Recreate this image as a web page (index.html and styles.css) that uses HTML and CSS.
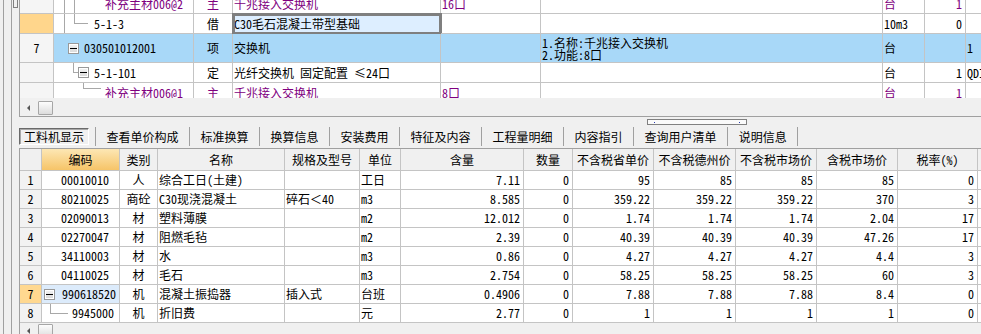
FILE: index.html
```html
<!DOCTYPE html>
<html>
<head>
<meta http-equiv="Content-Type" content="text/html; charset=utf-8"/>
<title>工料机显示</title>
<link rel="stylesheet" href="styles.css">
</head>
<body>
<div class="frame">
<div class="frame-inner">
<span class="nub"></span>
<div class="main">

<!-- upper grid: bill items and their quota rows -->
<div class="top-panel">
  <div class="tg">
    <div class="tg-scroll">
      <div class="tg-row r20 purple">
        <div class="c rh"></div>
        <div class="c"><span class="g9"></span><span class="guide"></span><span class="g9"></span><span class="guide"></span><span class="g8"></span><span class="elbow w18 short"></span><span class="g4"></span>补充主材006@2</div>
        <div class="c ctr">主</div>
        <div class="c">千兆接入交换机</div>
        <div class="c">16口</div>
        <div class="c"></div>
        <div class="c">台</div>
        <div class="c num">1</div>
        <div class="c"></div>
      </div>
      <div class="tg-row r20">
        <div class="c rh cur"></div>
        <div class="c"><span class="g9"></span><span class="guide"></span><span class="g9"></span><span class="elbow w14"></span><span class="g6"></span>5-1-3</div>
        <div class="c ctr">借</div>
        <div class="c edit">C30毛石混凝土带型基础</div>
        <div class="c"></div>
        <div class="c"></div>
        <div class="c">10m3</div>
        <div class="c num">0</div>
        <div class="c"></div>
      </div>
      <div class="tg-row r29 sel">
        <div class="c rh">7</div>
        <div class="c"><span class="g13"></span><span class="box"></span><span class="g5"></span>030501012001</div>
        <div class="c ctr">项</div>
        <div class="c">交换机</div>
        <div class="c"></div>
        <div class="c multi"><span>1.名称:千兆接入交换机</span><span>2.功能:8口</span></div>
        <div class="c">台</div>
        <div class="c num"></div>
        <div class="c">1</div>
      </div>
      <div class="tg-row r20">
        <div class="c rh"></div>
        <div class="c"><span class="g18"></span><span class="elbow w5"></span><span class="box"></span><span class="g5"></span>5-1-101</div>
        <div class="c ctr">定</div>
        <div class="c">光纤交换机 固定配置 ≤24口</div>
        <div class="c"></div>
        <div class="c"></div>
        <div class="c">台</div>
        <div class="c num">1</div>
        <div class="c">QDI</div>
      </div>
      <div class="tg-row r20 purple">
        <div class="c rh"></div>
        <div class="c"><span class="g28"></span><span class="elbow w18 short"></span><span class="g4"></span>补充主材006@1</div>
        <div class="c ctr">主</div>
        <div class="c">千兆接入交换机</div>
        <div class="c">8口</div>
        <div class="c"></div>
        <div class="c">台</div>
        <div class="c num">1</div>
        <div class="c"></div>
      </div>
    </div>
  </div>
  <div class="hscroll top-scroll"><span class="arrow"></span><span class="thumb"></span></div>
</div>

<div class="splitter"><div class="grip"><i></i><i></i></div></div>

<div class="tabs">
  <span class="tab active">工料机显示</span>
  <span class="sep"></span><span class="tab">查看单价构成</span>
  <span class="sep"></span><span class="tab">标准换算</span>
  <span class="sep"></span><span class="tab">换算信息</span>
  <span class="sep"></span><span class="tab">安装费用</span>
  <span class="sep"></span><span class="tab">特征及内容</span>
  <span class="sep"></span><span class="tab">工程量明细</span>
  <span class="sep"></span><span class="tab">内容指引</span>
  <span class="sep"></span><span class="tab">查询用户清单</span>
  <span class="sep"></span><span class="tab">说明信息</span>
  <span class="sep"></span>
</div>

<!-- lower grid: labour, material and machine lines -->
<div class="bottom-panel">
  <div class="bg-row bg-head r22">
    <div class="c"></div>
    <div class="c code-head">编码</div>
    <div class="c">类别</div>
    <div class="c">名称</div>
    <div class="c">规格及型号</div>
    <div class="c">单位</div>
    <div class="c">含量</div>
    <div class="c">数量</div>
    <div class="c">不含税省单价</div>
    <div class="c">不含税德州价</div>
    <div class="c">不含税市场价</div>
    <div class="c">含税市场价</div>
    <div class="c">税率(%)</div>
    <div class="c"></div>
  </div>
  <div class="bg-row r19">
    <div class="c rh">1</div><div class="c code">00010010</div><div class="c ctr">人</div><div class="c">综合工日(土建)</div><div class="c"></div><div class="c">工日</div>
    <div class="c num">7.11</div><div class="c num">0</div><div class="c num">95</div><div class="c num">85</div><div class="c num">85</div><div class="c num">85</div><div class="c num">0</div><div class="c"></div>
  </div>
  <div class="bg-row r19">
    <div class="c rh">2</div><div class="c code">80210025</div><div class="c ctr">商砼</div><div class="c">C30现浇混凝土</div><div class="c">碎石＜40</div><div class="c">m3</div>
    <div class="c num">8.585</div><div class="c num">0</div><div class="c num">359.22</div><div class="c num">359.22</div><div class="c num">359.22</div><div class="c num">370</div><div class="c num">3</div><div class="c"></div>
  </div>
  <div class="bg-row r19">
    <div class="c rh">3</div><div class="c code">02090013</div><div class="c ctr">材</div><div class="c">塑料薄膜</div><div class="c"></div><div class="c">m2</div>
    <div class="c num">12.012</div><div class="c num">0</div><div class="c num">1.74</div><div class="c num">1.74</div><div class="c num">1.74</div><div class="c num">2.04</div><div class="c num">17</div><div class="c"></div>
  </div>
  <div class="bg-row r19">
    <div class="c rh">4</div><div class="c code">02270047</div><div class="c ctr">材</div><div class="c">阻燃毛毡</div><div class="c"></div><div class="c">m2</div>
    <div class="c num">2.39</div><div class="c num">0</div><div class="c num">40.39</div><div class="c num">40.39</div><div class="c num">40.39</div><div class="c num">47.26</div><div class="c num">17</div><div class="c"></div>
  </div>
  <div class="bg-row r19">
    <div class="c rh">5</div><div class="c code">34110003</div><div class="c ctr">材</div><div class="c">水</div><div class="c"></div><div class="c">m3</div>
    <div class="c num">0.86</div><div class="c num">0</div><div class="c num">4.27</div><div class="c num">4.27</div><div class="c num">4.27</div><div class="c num">4.4</div><div class="c num">3</div><div class="c"></div>
  </div>
  <div class="bg-row r19">
    <div class="c rh">6</div><div class="c code">04110025</div><div class="c ctr">材</div><div class="c">毛石</div><div class="c"></div><div class="c">m3</div>
    <div class="c num">2.754</div><div class="c num">0</div><div class="c num">58.25</div><div class="c num">58.25</div><div class="c num">58.25</div><div class="c num">60</div><div class="c num">3</div><div class="c"></div>
  </div>
  <div class="bg-row r19">
    <div class="c rh cur">7</div><div class="c code-tree cur-cell"><span class="g1"></span><span class="box"></span><span class="g7"></span>990618520</div><div class="c ctr">机</div><div class="c">混凝土振捣器</div><div class="c">插入式</div><div class="c">台班</div>
    <div class="c num">0.4906</div><div class="c num">0</div><div class="c num">7.88</div><div class="c num">7.88</div><div class="c num">7.88</div><div class="c num">8.4</div><div class="c num">0</div><div class="c"></div>
  </div>
  <div class="bg-row r19">
    <div class="c rh">8</div><div class="c code-tree"><span class="g7"></span><span class="elbow w18"></span><span class="g4"></span>9945000</div><div class="c ctr">机</div><div class="c">折旧费</div><div class="c"></div><div class="c">元</div>
    <div class="c num">2.77</div><div class="c num">0</div><div class="c num">1</div><div class="c num">1</div><div class="c num">1</div><div class="c num">1</div><div class="c num">0</div><div class="c"></div>
  </div>
  <div class="hscroll low-scroll"><span class="arrow"></span><span class="thumb"></span></div>
</div>

</div>
</div>
</div>
</body>
</html>
```

FILE: styles.css
```css
body {
  margin: 0;
  width: 981px;
  height: 334px;
  overflow: hidden;
  background-color: #f0f0f0;
  font-family: "Noto Sans Mono CJK SC", "Noto Sans CJK SC", sans-serif;
  font-size: 12px;
  color: #000;
}

.frame {
  margin-left: 3px;
  border-left: 1px solid #a0a0a0;
  height: 334px;
}

.frame-inner {
  display: flex;
  align-items: flex-start;
  margin-left: 7px;
  border-left: 1px solid #a0a0a0;
  height: 334px;
}

.nub {
  flex: none;
  margin-left: 1px;
  width: 3px;
  height: 7px;
  border: 1px solid #808080;
  border-top: none;
}

.main {
  flex: none;
  width: 1100px;
  margin-left: 1px;
}

/* shared cell */
.c {
  box-sizing: border-box;
  display: flex;
  align-items: center;
  padding: 0 1px;
  border-right: 1px solid #c4c4c4;
  border-bottom: 1px solid #c4c4c4;
  white-space: nowrap;
  overflow: hidden;
  line-height: 14px;
}
.ctr { justify-content: center; }
.num { justify-content: flex-end; padding-right: 3px; }

.r19 { height: 19px; }
.r20 { height: 20px; }
.r22 { height: 22px; }
.r29 { height: 29px; }

/* tree bits */
.g1 { flex: none; width: 1px; }
.g4 { flex: none; width: 4px; }
.g5 { flex: none; width: 5px; }
.g6 { flex: none; width: 6px; }
.g7 { flex: none; width: 7px; }
.g8 { flex: none; width: 8px; }
.g9 { flex: none; width: 9px; }
.g13 { flex: none; width: 13px; }
.g18 { flex: none; width: 18px; }
.g28 { flex: none; width: 28px; }

.guide {
  flex: none;
  align-self: stretch;
  width: 1px;
  background-color: #a8a8a8;
}

.elbow {
  flex: none;
  align-self: flex-start;
  box-sizing: border-box;
  height: 10px;
  border-left: 1px solid #a8a8a8;
  border-bottom: 1px solid #a8a8a8;
}
.elbow.short { height: 6px; }
.w5 { width: 5px; }
.w14 { width: 14px; }
.w18 { width: 18px; }

.box {
  flex: none;
  box-sizing: border-box;
  width: 11px;
  height: 11px;
  border: 1px solid #999;
  box-shadow: inset 0 0 0 1px #fff;
  background: linear-gradient(#f4f4f4, #d8d8d8);
  display: flex;
  align-items: center;
  justify-content: center;
}
.box::before {
  content: "";
  width: 7px;
  height: 1px;
  background-color: #000;
}

/* upper grid */
.top-panel {
  border-left: 1px solid #a0a0a0;
  border-bottom: 1px solid #a0a0a0;
}

.tg {
  height: 98px;
  overflow: hidden;
  background-color: #fff;
}

.tg-scroll {
  margin-top: -6px;
}

.tg-row {
  display: grid;
  grid-template-columns: 34px 140px 39px 208px 100px 342px 42px 41px 60px;
}

.tg .rh {
  background-color: #f5f5f5;
  justify-content: center;
}
.tg .rh.cur { background-color: #ffd68c; }

.purple { color: #800080; }

.sel .c { background-color: #a8d8f8; }
.sel .c.rh { background-color: #f5f5f5; }

.edit {
  background-color: #ddeeff;
  outline: 3px solid #7f7f7f;
  outline-offset: -2px;
}

.multi {
  flex-direction: column;
  align-items: flex-start;
  justify-content: flex-start;
  padding-top: 3px;
  line-height: 12px;
}

/* scrollbars */
.hscroll {
  display: flex;
  align-items: flex-start;
  background-color: #f0f0f0;
}
.top-scroll { height: 18px; padding-top: 3px; box-sizing: border-box; }
.low-scroll { height: 17px; padding-top: 1px; box-sizing: border-box; }

.arrow {
  flex: none;
  width: 17px;
  height: 14px;
  display: flex;
  align-items: center;
  justify-content: center;
}
.arrow::before {
  content: "";
  border-right: 3px solid #555;
  border-top: 3px solid transparent;
  border-bottom: 3px solid transparent;
}

.thumb {
  flex: none;
  box-sizing: border-box;
  width: 15px;
  height: 14px;
  margin-left: 1px;
  border: 1px solid #a6a6a6;
  border-radius: 1px;
  background: linear-gradient(#fdfdfd, #dcdcdc);
}

/* splitter */
.splitter {
  height: 8px;
  overflow: hidden;
}

.grip {
  box-sizing: border-box;
  width: 100px;
  height: 6px;
  margin: 2px 0 0 628px;
  padding: 0 6px;
  border: 1px solid #808080;
  background-color: #fafafa;
  display: flex;
  align-items: center;
  justify-content: space-between;
}
.grip i {
  width: 1px;
  height: 1px;
  background-color: #2a3cb0;
}

/* tabs */
.tabs {
  height: 23px;
  display: flex;
  align-items: center;
}

.tab {
  flex: none;
  padding: 0 10.5px;
  line-height: 17px;
}

.tab.active {
  box-sizing: border-box;
  width: 70px;
  height: 17px;
  margin: 0 6px 0 0;
  padding: 0;
  border: 1px solid;
  border-color: #6a6a6a #fff #fff #6a6a6a;
  box-shadow: inset 1px 1px 0 #a8a8a8;
  display: flex;
  align-items: center;
  justify-content: center;
}

.sep {
  flex: none;
  width: 1px;
  height: 19px;
  background-color: #a0a0a0;
}

/* lower grid */
.bottom-panel {
  border-left: 1px solid #a0a0a0;
  border-top: 1px solid #a0a0a0;
  background-color: #fff;
}

.bg-row {
  display: grid;
  grid-template-columns: 22px 78px 38px 127px 75px 41px 123px 49px 81px 82px 81px 81px 80px 80px;
}

.bg-head .c {
  justify-content: center;
  background-color: #f0f0f0;
}
.bg-head .code-head {
  background: linear-gradient(#fde7b4, #f6c468);
}

.bottom-panel .rh {
  justify-content: center;
  background-color: #f2f2f2;
}
.bottom-panel .rh.cur { background-color: #ffd890; }

.code { padding-left: 19px; }
.cur-cell { background-color: #dcebfb; }
```
